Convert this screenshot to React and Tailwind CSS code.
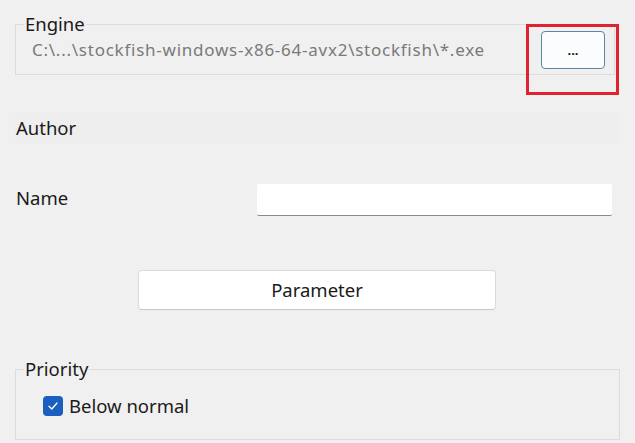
import React from 'react'

function GroupBox({ title, className = '', children }) {
  return (
    <fieldset className={`mx-[15px] border border-[#dcdcdc] ${className}`}>
      <legend className="ml-[8px] px-[1px] text-[18.5px] leading-[14px] text-[#1a1a1a]">{title}</legend>
      {children}
    </fieldset>
  )
}

export default function App() {
  return (
    <div className="relative w-[635px] h-[443px] overflow-hidden bg-[#f0f0f0] font-['Noto_Sans',sans-serif] text-[#1a1a1a]">
      <GroupBox title="Engine" className="mt-[17px] mr-[20px] pb-[5px]">
        <div className="flex items-center justify-between pl-[16px] pr-[9px]">
          <span className="text-[17px] text-[#7a7a7a] tracking-[0.75px]">
            C:\...\stockfish-windows-x86-64-avx2\stockfish\*.exe
          </span>
          <button className="w-[64px] h-[38px] rounded-[4px] border border-[#5a86a8] bg-[#fbfcfd] text-[13px] font-bold leading-none">
            ...
          </button>
        </div>
      </GroupBox>

      {/* annotation box */}
      <div className="absolute left-[526px] top-[24px] w-[93px] h-[71px] border-[3px] border-[#e0232e]" />

      <div className="mt-[37px] mx-[15px] h-[32px] flex items-center bg-[#eeeeee]">
        <span className="pl-[1px] text-[18.5px]">Author</span>
      </div>

      <div className="mt-[40px] ml-[15px] mr-[23px] flex items-center justify-between">
        <span className="pl-[1px] -mt-[5px] text-[18.5px]">Name</span>
        <input className="w-[355px] h-[32px] bg-white border-b border-[#8a8a8a] rounded-[2px] outline-none" />
      </div>

      <div className="mt-[54px] flex justify-center pr-[1px]">
        <button className="w-[358px] h-[40px] rounded-[4px] border border-[#dadada] border-b-[#c8c8c8] bg-white text-[18.5px]">
          Parameter
        </button>
      </div>

      <GroupBox title="Priority" className="mt-[52px] h-[78px]">
        <label className="mt-[16px] ml-[27px] flex items-center gap-[6px] text-[18.5px]">
          <span className="flex items-center justify-center w-[20px] h-[20px] rounded-[4px] bg-[#1a5fbf]">
            <svg width="12" height="12" viewBox="0 0 12 12" fill="none">
              <path d="M2 6.3 L4.8 9 L10 3" stroke="white" strokeWidth="1.3" strokeLinecap="round" strokeLinejoin="round" />
            </svg>
          </span>
          Below normal
        </label>
      </GroupBox>
    </div>
  )
}
